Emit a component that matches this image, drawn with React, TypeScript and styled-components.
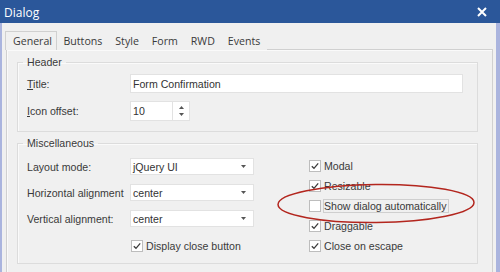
import React from 'react';
import styled, { createGlobalStyle } from 'styled-components';

const GlobalStyle = createGlobalStyle`
  html, body {
    margin: 0;
    padding: 0;
    background: #f0f0f0;
  }
  body {
    width: 500px;
    height: 272px;
    overflow: hidden;
  }
`;

const Window = styled.div`
  position: relative;
  width: 500px;
  height: 272px;
  display: flex;
  flex-direction: column;
  background: #f0f0f0;
  overflow: hidden;
`;

const TitleBar = styled.div`
  height: 23px;
  flex: none;
  display: flex;
  align-items: center;
  justify-content: space-between;
  padding: 0 13px 0 4px;
  background: #2b579a;
  color: #fff;
  font: 12px/23px "Open Sans", "Noto Sans", sans-serif;
`;

const TitleText = styled.span`
  padding-top: 2px;
`;

const Frame = styled.div`
  flex: 1;
  display: flex;
  flex-direction: column;
  border-left: 2px solid #aab4de;
  border-right: 4px solid #aab4de;
  padding: 8px 3px 0 4px;
`;

const TabBar = styled.div`
  display: flex;
  height: 19px;
  margin: 0 0 -1px -1px;
  position: relative;
  z-index: 1;
`;

const Tab = styled.div<{ $active?: boolean }>`
  box-sizing: border-box;
  height: 19px;
  display: flex;
  align-items: center;
  font: 10.6px "Open Sans", "Noto Sans", sans-serif;
  color: #3a3a3a;
  padding: ${(p) => (p.$active ? '0 4px 0 7px' : '0 6.5px')};
  background: #f0f0f0;
  border: ${(p) => (p.$active ? '1px solid #d0d0d0' : 'none')};
  border-bottom: none;
`;

const Panel = styled.div`
  flex: 1;
  border: 1px solid #d0d0d0;
  border-bottom: none;
  box-shadow: inset 1px 1px 0 #fafafa;
  padding: 5px 14px 0 10px;
  display: flex;
  flex-direction: column;
  gap: 4px;
`;

const Group = styled.fieldset<{ $pad: string }>`
  margin: 0;
  min-width: 0;
  padding: ${(p) => p.$pad};
  border: 1px solid #dcdcdc;
  box-shadow: inset 1px 1px 0 #fafafa;
`;

const Legend = styled.legend`
  margin-left: -4px;
  padding: 0 4px;
  font: 10.6px/14px "Liberation Sans", Arial, sans-serif;
  color: #3a3a3a;
`;

const Rows = styled.div`
  display: flex;
  flex-direction: column;
  gap: 8px;
`;

const Row = styled.div`
  display: grid;
  grid-template-columns: 103px auto;
  align-items: center;
`;

const Label = styled.span`
  font: 10.6px "Liberation Sans", Arial, sans-serif;
  color: #3a3a3a;
  white-space: nowrap;
`;

const TextBox = styled.div<{ $w: number; $h: number }>`
  box-sizing: border-box;
  width: ${(p) => p.$w}px;
  height: ${(p) => p.$h}px;
  display: flex;
  align-items: center;
  padding-left: 2px;
  background: #fff;
  border: 1px solid #e2e2e2;
  font: 10.6px "Liberation Sans", Arial, sans-serif;
  color: #333;
`;

const Spinner = styled.div`
  display: flex;
`;

const SpinButtons = styled.div`
  box-sizing: border-box;
  width: 18px;
  height: 20px;
  margin-left: -1px;
  background: #fff;
  border: 1px solid #e2e2e2;
  display: flex;
  flex-direction: column;
  align-items: center;
  justify-content: center;
  gap: 4px;
`;

const Select = styled(TextBox)`
  justify-content: space-between;
  padding: 0 7px 0 2px;
`;

const MiscBody = styled.div`
  display: flex;
`;

const LeftCol = styled.div`
  width: 227px;
  padding-top: 2px;
  display: flex;
  flex-direction: column;
  gap: 9px;
`;

const RightCol = styled.div`
  margin-left: 55px;
  display: flex;
  flex-direction: column;
`;

const Check = styled.div<{ $indent?: number }>`
  height: 20px;
  display: flex;
  align-items: center;
  margin-left: ${(p) => p.$indent ?? 0}px;
`;

const Box = styled.span`
  box-sizing: border-box;
  width: 12px;
  height: 12px;
  flex: none;
  background: #fff;
  border: 1px solid #bdbdbd;
  display: flex;
  align-items: center;
  justify-content: center;
`;

const CheckText = styled.span<{ $focus?: boolean }>`
  font: 10.6px/12px "Liberation Sans", Arial, sans-serif;
  color: #3a3a3a;
  white-space: nowrap;
  margin-left: ${(p) => (p.$focus ? '2px' : '3px')};
  padding: ${(p) => (p.$focus ? '0 1px 0 0' : '0')};
  border: ${(p) => (p.$focus ? '1px solid #cfcfcf' : 'none')};
`;

const Annotation = styled.svg`
  position: absolute;
  left: 276px;
  top: 183px;
  pointer-events: none;
`;

const Arrow = ({ up }: { up?: boolean }) => (
  <svg width="5" height="3" viewBox="0 0 5 3">
    <path d={up ? 'M0 3 L2.5 0 L5 3 Z' : 'M0 0 L2.5 3 L5 0 Z'} fill="#555" />
  </svg>
);

const CheckBox = ({ label, checked, focus, indent }: { label: string; checked?: boolean; focus?: boolean; indent?: number }) => (
  <Check $indent={indent}>
    <Box>
      {checked && (
        <svg width="10" height="10" viewBox="0 0 10 10">
          <path d="M1.8 5.2 L4 7.3 L8.2 2.4" fill="none" stroke="#3c3c3c" strokeWidth="1.3" />
        </svg>
      )}
    </Box>
    <CheckText $focus={focus}>{label}</CheckText>
  </Check>
);

const tabs = ['General', 'Buttons', 'Style', 'Form', 'RWD', 'Events'];

export default function App() {
  return (
    <>
      <GlobalStyle />
      <Window>
        <TitleBar>
          <TitleText>Dialog</TitleText>
          <svg width="10" height="10" viewBox="0 0 10 10">
            <path d="M1 1 L9 9 M9 1 L1 9" stroke="#fff" strokeWidth="2" />
          </svg>
        </TitleBar>
        <Frame>
          <TabBar>
            {tabs.map((t, i) => (
              <Tab key={t} $active={i === 0}>{t}</Tab>
            ))}
          </TabBar>
          <Panel>
            <Group $pad="5px 13px 10px 9px">
              <Legend>Header</Legend>
              <Rows>
                <Row>
                  <Label><u>T</u>itle:</Label>
                  <TextBox $w={333} $h={19}>Form Confirmation</TextBox>
                </Row>
                <Row>
                  <Label><u>I</u>con offset:</Label>
                  <Spinner>
                    <TextBox $w={43} $h={20}>10</TextBox>
                    <SpinButtons>
                      <Arrow up />
                      <Arrow />
                    </SpinButtons>
                  </Spinner>
                </Row>
              </Rows>
            </Group>
            <Group $pad="6px 0 7px 9px">
              <Legend>Miscellaneous</Legend>
              <MiscBody>
                <LeftCol>
                  <Row>
                    <Label>Layout mode:</Label>
                    <Select $w={124} $h={17}>jQuery UI<Arrow /></Select>
                  </Row>
                  <Row>
                    <Label>Horizontal alignment</Label>
                    <Select $w={124} $h={17}>center<Arrow /></Select>
                  </Row>
                  <Row>
                    <Label>Vertical alignment:</Label>
                    <Select $w={124} $h={17}>center<Arrow /></Select>
                  </Row>
                  <CheckBox label="Display close button" checked indent={104} />
                </LeftCol>
                <RightCol>
                  <CheckBox label="Modal" checked />
                  <CheckBox label="Resizable" checked />
                  <CheckBox label="Show dialog automatically" focus />
                  <CheckBox label="Draggable" checked />
                  <CheckBox label="Close on escape" checked />
                </RightCol>
              </MiscBody>
            </Group>
          </Panel>
        </Frame>
        <Annotation width="200" height="42" viewBox="0 0 200 42">
          <ellipse cx="100" cy="20.5" rx="98" ry="19" fill="none" stroke="#b3261e" strokeWidth="1.5" transform="rotate(-0.6 100 20.5)" />
        </Annotation>
      </Window>
    </>
  );
}
